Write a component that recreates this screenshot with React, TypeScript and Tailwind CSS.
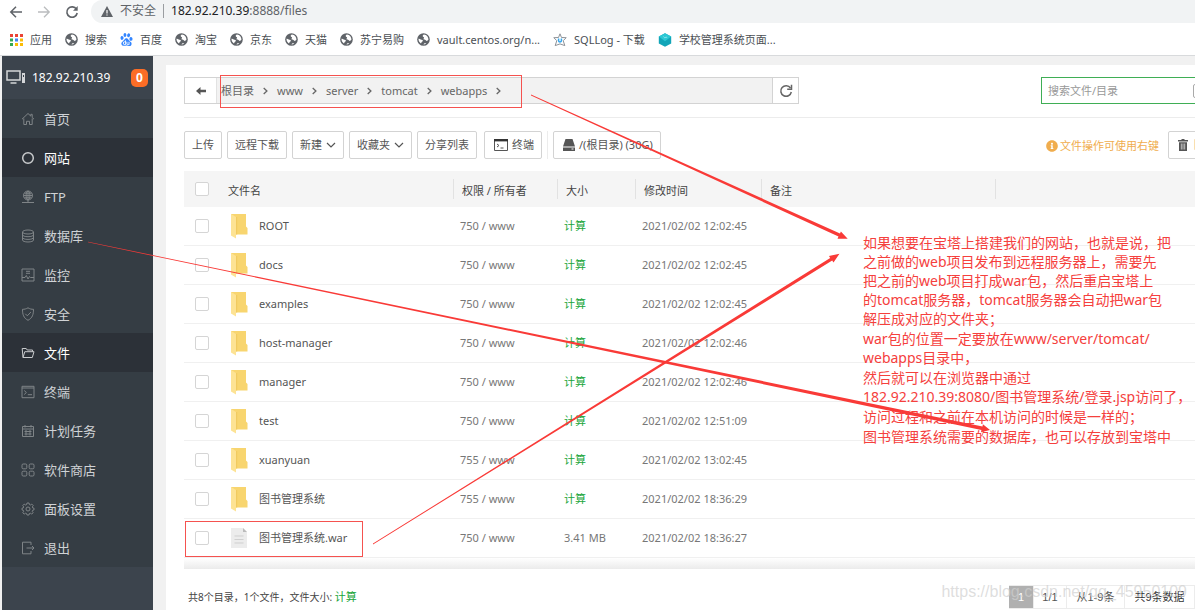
import type { ReactNode } from "react";
import { FaInfoCircle } from "react-icons/fa";
import { SiBaidu } from "react-icons/si";

const files = [
  { name: "ROOT", owner: "750 / www", time: "2021/02/02 12:02:45" },
  { name: "docs", owner: "750 / www", time: "2021/02/02 12:02:45" },
  { name: "examples", owner: "750 / www", time: "2021/02/02 12:02:45" },
  { name: "host-manager", owner: "750 / www", time: "2021/02/02 12:02:46" },
  { name: "manager", owner: "750 / www", time: "2021/02/02 12:02:46" },
  { name: "test", owner: "750 / www", time: "2021/02/02 12:51:09" },
  { name: "xuanyuan", owner: "755 / www", time: "2021/02/02 13:02:45" },
  { name: "图书管理系统", owner: "755 / www", time: "2021/02/02 18:36:29" },
  { name: "图书管理系统.war", owner: "750 / www", time: "2021/02/02 18:36:27", size: "3.41 MB" },
];

function GlobeIcon() {
  return (
    <svg viewBox="0 0 14 14" className="size-[13px]">
      <circle cx="7" cy="7" r="6.8" fill="#5f6368" />
      <path
        d="M7.6 1.6C6.4 2 6 2.600 6.200 3.400c.2.8 1.300.6 1.400 1.500.1.8-.9 1.100-.5 1.900.3.7 1.300.5 2 .7.7.3.6 1 1.200 1 .8 0 1.500-.5 2-1.100.2-2.900-1.800-5.400-4.700-5.800zM1.600 6.300c.8-.2 1.600.1 2.400.6.7.5 1.800.1 2.200.9.4.7-.2 1.300-.9 1.700-.6.4-.4 1.500-1 1.700C2.600 10.300 1.500 8.500 1.600 6.300zM7 12.400c.2-.8.9-1.200 1.700-1.300.5-.1.9.1 1.300.3-.9.7-1.900 1-3 1z"
        fill="#fff"
      />
    </svg>
  );
}

function AppsIcon() {
  return (
    <svg viewBox="0 0 13 13" className="size-[13px]">
      <path d="M0 1h3v3H0zM5 1h3v3H5zM10 1h3v3h-3z" fill="#ea4335" />
      <path d="M0 5.500h3v3H0zM0 10h3v3H0z" fill="#34a853" />
      <path d="M5 5.500h3v3H5z" fill="#4285f4" />
      <path d="M10 5.500h3v3h-3zM5 10h3v3H5zM10 10h3v3h-3z" fill="#fbbc05" />
    </svg>
  );
}

function StarIcon() {
  return (
    <svg viewBox="0 0 14 14" className="size-[14px]" fill="none">
      <path
        d="M7 .8l1.500 3.700 4.700.2-3 3 1.600 4.900L7 10.900l-4.800 1.700 1.600-4.900-3-3 4.700-.2z"
        stroke="#8d9298"
        strokeLinejoin="round"
      />
      <path d="M5.600 5.500v2.200c0 1.600 2.800 1.600 2.800 0V5.500" stroke="#35a7ee" strokeWidth="1.500" />
    </svg>
  );
}

function GemIcon() {
  return (
    <svg viewBox="0 0 14 14" className="size-[14px]">
      <path d="M7 .3l6.200 3.200v6.900L7 13.800.8 10.400V3.500z" fill="#12a5b8" />
      <path d="M7 .3l6.200 3.200L7 8.200.8 3.500z" fill="#2cc8d4" />
      <path d="M5.500 3.500l1.300 1.400 1.500-1 .6 1" stroke="#9be9ef" strokeWidth=".8" fill="none" />
    </svg>
  );
}

const bookmarks: { label: string; icon: ReactNode }[] = [
  { label: "应用", icon: <AppsIcon /> },
  { label: "搜索", icon: <GlobeIcon /> },
  { label: "百度", icon: <SiBaidu className="size-[13px] text-[#3385ff]" /> },
  { label: "淘宝", icon: <GlobeIcon /> },
  { label: "京东", icon: <GlobeIcon /> },
  { label: "天猫", icon: <GlobeIcon /> },
  { label: "苏宁易购", icon: <GlobeIcon /> },
  { label: "vault.centos.org/n...", icon: <GlobeIcon /> },
  { label: "SQLLog - 下载", icon: <StarIcon /> },
  { label: "学校管理系统页面...", icon: <GemIcon /> },
];

const menu: { label: string; active?: boolean; icon: ReactNode }[] = [
  { label: "首页", icon: <path d="M1 7.200L7 1.500l2.800 2.600V2.300h1.400v3.200L13 7.200M2.800 6.500v6h2.700V9.300h3v3.200h2.700v-6" /> },
  { label: "网站", active: true, icon: <circle cx="7" cy="7" r="5.300" strokeWidth="1.500" /> },
  {
    label: "FTP",
    icon: (
      <>
        <circle cx="7" cy="5.500" r="4.500" />
        <ellipse cx="7" cy="5.500" rx="2" ry="4.500" />
        <path d="M2.500 5.500h9M3.300 3.200h7.400M3.300 7.800h7.400M7 1v11.500M1 12.500h12" />
      </>
    ),
  },
  {
    label: "数据库",
    icon: (
      <>
        <ellipse cx="7" cy="3" rx="5.500" ry="2" />
        <path d="M1.500 3v8c0 1.200 2.400 2 5.500 2s5.500-.8 5.500-2V3M1.500 5.700c0 1.200 2.400 2 5.500 2s5.500-.8 5.500-2M1.500 8.400c0 1.200 2.400 2 5.500 2s5.500-.8 5.500-2" />
      </>
    ),
  },
  {
    label: "监控",
    icon: <path d="M1 1h12v12H1zM5 3.300h4M5 5.300h4M1 9.500h3l1.300-2 1.700 3.500 1.500-2.500 1 1H13" />,
  },
  {
    label: "安全",
    icon: <path d="M7 .8c1.800 1.200 3.600 1.500 5.500 1.500 0 5-1 8.700-5.500 11-4.500-2.300-5.500-6-5.500-11C3.400 2.300 5.200 2 7 .8zM4.300 6.800l2 2 3.600-3.700" />,
  },
  {
    label: "文件",
    active: true,
    icon: <path d="M2 11.500L1.200 2.500h4l1 1.500h5.300v1.700M2 11.500l1.800-5.800H13l-1.700 5.800z" />,
  },
  { label: "终端", icon: <path d="M1 1.300h12v11.400H1zM1 3h12M3.200 5.500l2.200 2-2.200 2M6.800 9.700H11" /> },
  {
    label: "计划任务",
    icon: <path d="M1.500 2.500h11v10h-11zM1.500 5h11M4 1v2.500M10 1v2.500M3.500 7.500h7M3.500 10h7M5 6v5.500M9 6v5.500" />,
  },
  {
    label: "软件商店",
    icon: (
      <>
        <rect x="1" y="1" width="4.800" height="4.800" rx="1.200" />
        <rect x="8.200" y="1" width="4.800" height="4.800" rx="1.200" />
        <rect x="1" y="8.200" width="4.800" height="4.800" rx="1.200" />
        <rect x="8.200" y="8.200" width="4.800" height="4.800" rx="1.200" />
      </>
    ),
  },
  {
    label: "面板设置",
    icon: (
      <>
        <circle cx="7" cy="7" r="2" />
        <path d="M6 1h2l.4 1.600 1 .4 1.400-.9 1.400 1.400-.9 1.400.4 1L13 6.200v1.700l-1.400.4-.4 1 .9 1.400-1.400 1.400-1.400-.9-1 .4L8 13H6l-.4-1.400-1-.4-1.400.9-1.400-1.400.9-1.400-.4-1L1 7.900V6.200l1.300-.3.4-1-.9-1.400 1.400-1.400 1.400.9 1-.4z" />
      </>
    ),
  },
  { label: "退出", icon: <path d="M10 4V1.200H1.500v11.600H10V10M5.500 7H13M11 5l2 2-2 2" /> },
];

function Chevron() {
  return (
    <svg viewBox="0 0 5 8" className="h-2 w-[5px]" fill="none" stroke="#666" strokeWidth="1.300">
      <path d="M.7 1l3.200 3L.7 7" />
    </svg>
  );
}

function CaretDown() {
  return (
    <svg viewBox="0 0 10 6" className="h-1.5 w-2.5" fill="none" stroke="#555" strokeWidth="1.200">
      <path d="M1 1l4 4 4-4" />
    </svg>
  );
}

function FolderIcon() {
  return (
    <svg viewBox="0 0 18 26" className="h-[26px] w-[18px]">
      <path d="M1 1h15v12.500l1.500 1.500v6.500H5z" fill="#f8d56f" />
      <path d="M1 1l5 3v21.500L1 22.500z" fill="#fde394" />
      <path d="M6 4v17.500h1.200V4z" fill="#f1ca60" />
    </svg>
  );
}

function FileIcon() {
  return (
    <svg viewBox="0 0 18 22" className="h-[22px] w-[18px]">
      <path d="M1 1h12l4 4v16H1z" fill="#ececec" />
      <path d="M13 1l4 4h-4z" fill="#bbb" />
      <path d="M4.500 9h9M4.500 12.500h9M4.500 16h9" stroke="#cfcfcf" />
    </svg>
  );
}

function ToolButton({ children }: { children: ReactNode }) {
  return (
    <button
      type="button"
      className="flex h-[28px] shrink-0 items-center gap-1 whitespace-nowrap rounded-xs border border-[#d3d3d3] bg-white px-[7px] text-[#555]"
    >
      {children}
    </button>
  );
}

function Browser() {
  return (
    <header className="bg-white">
      <div className="flex h-[23px] items-center overflow-hidden">
        <div className="flex w-[91px] shrink-0 items-center gap-[14px] pl-[9px]">
          <button type="button" aria-label="后退">
            <svg viewBox="0 0 14 14" className="size-[14px]" fill="none" stroke="#5f6368" strokeWidth="1.500">
              <path d="M13 7H2M7 1.800L1.800 7 7 12.200" />
            </svg>
          </button>
          <button type="button" aria-label="前进">
            <svg viewBox="0 0 14 14" className="size-[14px]" fill="none" stroke="#babcbe" strokeWidth="1.300">
              <path d="M1 7h11M7 1.800L12.200 7 7 12.200" />
            </svg>
          </button>
          <button type="button" aria-label="刷新">
            <svg viewBox="0 0 14 14" className="size-[14px]" fill="none" stroke="#5f6368" strokeWidth="1.600">
              <path d="M11.500 4.300A5.200 5.200 0 1 0 12.200 8" />
              <path d="M12.700 1v4.800H8z" fill="#5f6368" stroke="none" />
            </svg>
          </button>
        </div>
        <div className="flex h-full flex-1 items-center rounded-l-full bg-[#f1f3f4] pb-px pl-[10px] text-[#5f6368]">
          <svg viewBox="0 0 12 11" className="h-[11px] w-3">
            <path d="M6 0l6 11H0z" fill="#5f6368" />
            <path d="M5.400 4h1.200v3.500H5.400zM5.400 8.400h1.200v1.200H5.400z" fill="#fff" />
          </svg>
          <span className="ml-[7px] text-[12px]">不安全</span>
          <span className="mx-[7px] h-3.5 w-px bg-[#9a9da1]" />
          <span className="text-[12px]">
            <span className="text-[#202124]">182.92.210.39</span>:8888/files
          </span>
        </div>
      </div>
      <nav className="flex h-[33px] items-center gap-[13px] overflow-hidden border-b border-[#d8dadc] pl-[10px] pt-px text-[#4b4f54]">
        {bookmarks.map((b) => (
          <a key={b.label} href="#" className="flex shrink-0 items-center gap-[7px]">
            {b.icon}
            {b.label}
          </a>
        ))}
      </nav>
    </header>
  );
}

function Sidebar() {
  return (
    <aside className="ml-[2px] w-[151px] shrink-0 bg-[#3c444d]">
      <div className="flex h-[43px] items-center pl-1 pr-[5px] text-[12px] text-white">
        <svg viewBox="0 0 20 15" className="h-[15px] w-5" fill="none" stroke="#d4d6d8" strokeWidth="1.500">
          <path d="M1 1h13v9H1zM4.500 13h6" />
          <path d="M16 3h3v10h-3z" fill="#d4d6d8" stroke="none" />
          <path d="M17 5h1v2h-1z" fill="#3c444d" stroke="none" />
        </svg>
        <span className="ml-[6px]">182.92.210.39</span>
        <span className="ml-auto flex h-[18px] w-[17px] items-center justify-center rounded-[5px] bg-[#fc6d26] font-bold">
          0
        </span>
      </div>
      <nav className="bg-[#353d44]">
        {menu.map((item) => (
          <a
            key={item.label}
            href="#"
            className={
              item.active
                ? "flex h-[39px] items-center gap-[9px] bg-[#2c3138] pl-[19px] text-[13px] text-white"
                : "flex h-[39px] items-center gap-[9px] pl-[19px] text-[13px] text-[#d0d3d6]"
            }
          >
            <svg
              viewBox="0 0 14 14"
              className="size-[14px]"
              fill="none"
              stroke={item.active ? "#c9cbcd" : "#7f8487"}
              strokeWidth="1"
            >
              {item.icon}
            </svg>
            {item.label}
          </a>
        ))}
      </nav>
    </aside>
  );
}

function PathBar() {
  return (
    <div className="flex items-center border-b border-[#ececec] pb-[13px]">
      <div className="flex h-[27px] w-[615px] shrink-0 border border-[#d3d3d3] text-[#666]">
        <button type="button" aria-label="返回上级" className="flex w-8 items-center justify-center border-r border-[#e2e2e2]">
          <svg viewBox="0 0 10 8" className="h-2 w-2.5" fill="#555">
            <path d="M0 4l4.500-4v2.800H10v2.400H4.500V8z" />
          </svg>
        </button>
        <ol className="flex flex-1 items-center gap-[9px] bg-[#f2f2f2] pl-1">
          {["根目录", "www", "server", "tomcat", "webapps"].map((part) => (
            <li key={part} className="flex items-center gap-[9px]">
              <a href="#">{part}</a>
              <Chevron />
            </li>
          ))}
        </ol>
        <button type="button" aria-label="刷新目录" className="flex w-[26px] items-center justify-center border-l border-[#d3d3d3]">
          <svg viewBox="0 0 14 14" className="size-[14px]" fill="none" stroke="#666" strokeWidth="1.500">
            <path d="M11.500 4A5.300 5.300 0 1 0 12.300 8" />
            <path d="M12.500.8v4.400H8.200" />
          </svg>
        </button>
      </div>
      <div className="relative ml-auto h-[27px] w-[154px] border border-r-0 border-[#3fae55]">
        <input
          type="text"
          aria-label="搜索文件/目录"
          placeholder="搜索文件/目录"
          className="block h-full w-full pl-[6px] outline-none placeholder:text-[#999]"
        />
        <input
          type="checkbox"
          aria-label="包含子目录"
          className="absolute -right-[12px] top-[6px] size-[14px] appearance-none rounded-xs border border-[#aaa]"
        />
      </div>
    </div>
  );
}

function Toolbar() {
  return (
    <div className="flex items-center gap-[5px] pb-3 pt-[13px]">
      <ToolButton>上传</ToolButton>
      <ToolButton>远程下载</ToolButton>
      <ToolButton>
        新建 <CaretDown />
      </ToolButton>
      <ToolButton>
        收藏夹 <CaretDown />
      </ToolButton>
      <ToolButton>分享列表</ToolButton>
      <div className="flex border-r border-[#ececec] pl-[2px] pr-[5px]">
        <ToolButton>
          <svg viewBox="0 0 14 12" className="ml-[2px] h-3 w-[14px]" fill="none" stroke="#555">
            <path d="M.5.500h13v11H.5zM3 5l2 1.500L3 8M6.500 9h3" />
            <path d="M0 1.200h14" stroke="#333" strokeWidth="2.400" />
          </svg>
          终端
        </ToolButton>
      </div>
      <ToolButton>
        <svg viewBox="0 0 12 12" className="ml-[2px] size-3" fill="#555">
          <path d="M2.500 0h7L12 7.500H0zM0 8.500h12V12H0z" />
          <path d="M8.500 10h2" stroke="#fff" />
        </svg>
        /(根目录) (30G)
      </ToolButton>
      <p className="ml-auto flex shrink-0 items-center gap-[2px] pr-1 pt-[2px] text-[#f0ad4e]">
        <FaInfoCircle className="size-3" />
        文件操作可使用右键
      </p>
      <div className="-mr-[40px]">
        <ToolButton>
          <svg viewBox="0 0 10 12" className="mx-[2px] h-3 w-2.5" fill="#555">
            <path d="M3.500 0h3v1H10v1.500H0V1h3.500zM1 3.200h8V12H1z" />
            <path d="M3.300 4.500v6M5 4.500v6M6.700 4.500v6" stroke="#ddd" strokeWidth=".8" />
          </svg>
          回收站
        </ToolButton>
      </div>
    </div>
  );
}

function Tick({ label }: { label: string }) {
  return (
    <input
      type="checkbox"
      aria-label={label}
      className="ml-[11px] block size-[14px] appearance-none rounded-xs border border-[#d5d5d5] bg-white"
    />
  );
}

function FileTable() {
  return (
    <table className="w-full table-fixed border-separate border-spacing-0">
      <colgroup>
        <col className="w-9" />
        <col className="w-[233px]" />
        <col className="w-[104px]" />
        <col className="w-[78px]" />
        <col className="w-[126px]" />
        <col className="w-[234px]" />
        <col />
      </colgroup>
      <thead>
        <tr className="bg-[#f5f5f5] text-left text-[#444]">
          <th className="h-9">
            <Tick label="全选" />
          </th>
          <th className="pl-2 pt-[3px] font-normal">文件名</th>
          {["权限 / 所有者", "大小", "修改时间", "备注", ""].map((title) => (
            <th key={title} className="font-normal">
              <div className="flex h-5 items-center border-l border-[#e2e2e2] pl-2 pt-[3px]">{title}</div>
            </th>
          ))}
        </tr>
      </thead>
      <tbody className="text-[#777]">
        {files.map((file) => (
          <tr key={file.name} className="[&>td]:border-b [&>td]:border-[#f0f0f0]">
            <td className="h-[39px]">
              <Tick label={file.name} />
            </td>
            <td className="pl-[10px]">
              <div className="flex items-center gap-[11px] text-[#555]">
                {file.size ? <FileIcon /> : <FolderIcon />}
                {file.name}
              </div>
            </td>
            <td className="pl-[7px]">{file.owner}</td>
            <td className="pl-[7px]">
              {file.size ?? (
                <a href="#" className="text-[#20a53a]">
                  计算
                </a>
              )}
            </td>
            <td className="pl-[7px]">{file.time}</td>
            <td />
            <td />
          </tr>
        ))}
      </tbody>
    </table>
  );
}

function Footer() {
  return (
    <footer className="flex items-center pt-4">
      <p className="pl-1 text-[10px] text-[#444]">
        共8个目录，1个文件，文件大小:{" "}
        <a href="#" className="text-[11px] text-[#20a53a]">
          计算
        </a>
      </p>
      <div className="ml-auto flex h-6 font-['Liberation_Sans','Noto_Sans_CJK_SC',sans-serif] text-[#555] [&>*]:flex [&>*]:items-center [&>*]:justify-center [&>*]:border [&>*]:border-l-0 [&>*]:border-[#ececec]">
        <span className="w-[25px] bg-[#b0b0b0] text-white">1</span>
        <span className="w-[33px]">1/1</span>
        <span className="w-[58px]">从1-9条</span>
        <span className="w-[70px] text-[#333]">共9条数据</span>
      </div>
    </footer>
  );
}

// Red marks drawn over the page: two frames and three tapering arrows
function Annotations() {
  return (
    <>
      <svg
        viewBox="0 0 1195 610"
        className="pointer-events-none absolute left-0 top-0 h-[610px] w-[1195px]"
        fill="#f93a37"
      >
        <g fill="none" stroke="#f5524f">
          <rect x="220.500" y="75.500" width="301" height="32" />
          <rect x="185.500" y="521.500" width="177" height="35" />
        </g>
        <path d="M531 94.600L840 233.500l.9-2.100 6.800 7.400-10.200-.1 1-2.200L531 95.400z" />
        <path d="M373 543.600L830.200 258l-1.200-2 10.500-2.300-6 8.800-1.300-2L373 544.400z" />
        <path d="M88 241.700L982.500 426.500l.4-2.200 7.100 5.700-9 2.200.4-2.200L88 242.300z" />
      </svg>
      <div className="absolute left-[863px] top-[233px] flex flex-col gap-px whitespace-nowrap text-[14px] leading-[19px] text-[#f5403d]">
        <p>
          如果想要在宝塔上搭建我们的网站，也就是说，把
          <br />
          之前做的web项目发布到远程服务器上，需要先
          <br />
          把之前的web项目打成war包，然后重启宝塔上
          <br />
          的tomcat服务器，tomcat服务器会自动把war包
          <br />
          解压成对应的文件夹；
        </p>
        <p>
          war包的位置一定要放在www/server/tomcat/
          <br />
          webapps目录中，
        </p>
        <p>
          然后就可以在浏览器中通过
          <br />
          182.92.210.39:8080/图书管理系统/登录.jsp访问了，
        </p>
        <p>访问过程和之前在本机访问的时候是一样的；</p>
        <p>图书管理系统需要的数据库，也可以存放到宝塔中</p>
      </div>
      <p className="pointer-events-none absolute right-2 top-[583px] font-['Liberation_Sans',sans-serif] text-[16px] leading-[18px] text-[#cfcfcf]/70">
        https://blog.csdn.net/qq_45950109
      </p>
    </>
  );
}

export default function App() {
  return (
    <div className="relative flex min-h-screen flex-col overflow-hidden bg-[#f1f1f1] font-['Noto_Sans','Noto_Sans_CJK_SC',sans-serif] text-[11px] leading-4">
      <Browser />
      <div className="flex flex-1">
        <Sidebar />
        <main className="ml-[13px] mt-[9px] min-w-0 flex-1 overflow-hidden bg-white pl-[18px] pt-3">
          <PathBar />
          <Toolbar />
          <FileTable />
          <div className="h-[11px] bg-linear-to-b from-white to-[#ebebeb]" />
          <Footer />
        </main>
      </div>
      <Annotations />
    </div>
  );
}
